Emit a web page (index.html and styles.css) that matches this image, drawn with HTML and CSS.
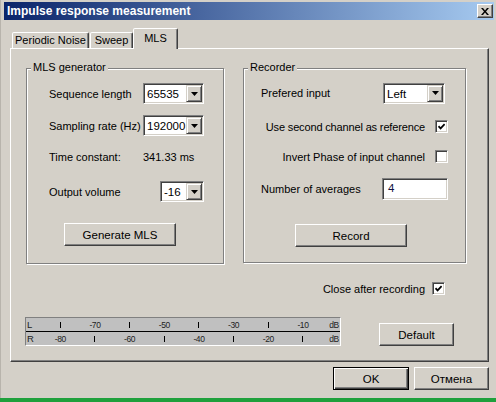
FILE: index.html
```html
<!DOCTYPE html>
<html>
<head>
<meta charset="utf-8">
<link rel="stylesheet" href="styles.css">
</head>
<body>
<div class="win">
  <div class="title">
    <span class="title-text">Impulse response measurement</span>
    <div class="xbtn"><svg width="8" height="7" viewBox="0 0 8 7"><path d="M0 0h2l2 2.4L6 0h2L5 3.5 8 7H6L4 4.6 2 7H0l3-3.5z" fill="#000"/></svg></div>
  </div>
  <div class="tabs">
    <div class="tab t1">Periodic Noise</div>
    <div class="tab t2">Sweep</div>
    <div class="tab t3 sel">MLS</div>
  </div>
  <div class="panel">
    <div class="groups">
      <div class="group g1">
        <div class="legend">MLS generator</div>
        <div class="row">
          <span>Sequence length</span>
          <div class="combo w61"><span class="val">65535</span><span class="dd"><svg width="7" height="4" viewBox="0 0 7 4"><polygon points="0,0 7,0 3.5,4" fill="#000"/></svg></span></div>
        </div>
        <div class="row r2">
          <span>Sampling rate (Hz)</span>
          <div class="combo w61"><span class="val">192000</span><span class="dd"><svg width="7" height="4" viewBox="0 0 7 4"><polygon points="0,0 7,0 3.5,4" fill="#000"/></svg></span></div>
        </div>
        <div class="row r3">
          <span>Time constant:</span>
          <span class="tc">341.33 ms</span>
        </div>
        <div class="row r4">
          <span>Output volume</span>
          <div class="combo w44"><span class="val">-16</span><span class="dd"><svg width="7" height="4" viewBox="0 0 7 4"><polygon points="0,0 7,0 3.5,4" fill="#000"/></svg></span></div>
        </div>
        <div class="btn gen">Generate MLS</div>
      </div>
      <div class="group g2">
        <div class="legend">Recorder</div>
        <div class="row rr1">
          <span>Prefered input</span>
          <div class="combo w62"><span class="val">Left</span><span class="dd"><svg width="7" height="4" viewBox="0 0 7 4"><polygon points="0,0 7,0 3.5,4" fill="#000"/></svg></span></div>
        </div>
        <div class="crow cr1">
          <span>Use second channel as reference</span>
          <span class="check"><svg width="7" height="7" viewBox="0 0 7 7"><path d="M0.5 3.2 L2.6 5.4 L6.6 1.2" fill="none" stroke="#000" stroke-width="1.7"/></svg></span>
        </div>
        <div class="crow cr2">
          <span>Invert Phase of input channel</span>
          <span class="check"></span>
        </div>
        <div class="row rr4">
          <span>Number of averages</span>
          <div class="edit">4</div>
        </div>
        <div class="btn rec">Record</div>
      </div>
    </div>
    <div class="close-row">
      <span>Close after recording</span>
      <span class="check"><svg width="7" height="7" viewBox="0 0 7 7"><path d="M0.5 3.2 L2.6 5.4 L6.6 1.2" fill="none" stroke="#000" stroke-width="1.7"/></svg></span>
    </div>
    <div class="meter-row">
      <div class="meter">
        <div class="mrow">
          <span class="ch">L</span>
          <span class="tick"></span><span class="lbl">-70</span>
          <span class="tick"></span><span class="lbl">-50</span>
          <span class="tick"></span><span class="lbl">-30</span>
          <span class="tick"></span><span class="lbl">-10</span>
          <span class="db">dB</span>
        </div>
        <div class="mrow bot">
          <span class="ch">R</span>
          <span class="lbl">-80</span><span class="tick"></span>
          <span class="lbl">-60</span><span class="tick"></span>
          <span class="lbl">-40</span><span class="tick"></span>
          <span class="lbl">-20</span><span class="tick"></span>
          <span class="db">dB</span>
        </div>
      </div>
      <div class="btn dflt">Default</div>
    </div>
  </div>
  <div class="buttons">
    <div class="btn ok">OK</div>
    <div class="btn cancel">Отмена</div>
  </div>
</div>
</body>
</html>
```
FILE: styles.css
```css
html, body {
  margin: 0;
  padding: 0;
}
body {
  background: #1fa03c;
  font-family: "Liberation Sans", Arial, sans-serif;
  font-size: 11px;
  color: #000;
  white-space: nowrap;
}
.win {
  width: 496px;
  height: 398px;
  background: #d4d0c8;
  box-sizing: border-box;
  overflow: hidden;
  border-left: 1px solid #b8b4ac;
}
.title {
  margin: 2px 2px 0 3px;
  height: 18px;
  background: linear-gradient(to right, #0a246a, #a6caf0);
  display: flex;
  align-items: center;
  justify-content: space-between;
}
.title-text {
  color: #fff;
  font-weight: bold;
  font-size: 12px;
  padding-left: 3px;
}
.xbtn {
  width: 16px;
  height: 14px;
  box-sizing: border-box;
  background: #d4d0c8;
  border: 1px solid;
  border-color: #fff #404040 #404040 #fff;
  box-shadow: inset -1px -1px #808080;
  display: flex;
  align-items: center;
  justify-content: center;
  margin-right: 1px;
}
.tabs {
  display: flex;
  align-items: flex-end;
  height: 20px;
  margin: 8px 0 0 11px;
}
.tab {
  height: 16px;
  box-sizing: border-box;
  border: 1px solid;
  border-bottom: none;
  border-color: #fff #404040 transparent #fff;
  box-shadow: inset -1px 0 #808080;
  border-radius: 2px 2px 0 0;
  text-align: center;
  line-height: 15px;
  background: #d4d0c8;
}
.t1 { width: 77px; }
.t2 { width: 43px; margin-left: 1px; }
.t3 {
  width: 45px;
  height: 21px;
  margin-bottom: -1px;
  position: relative;
  z-index: 1;
  line-height: 18px;
}
.panel {
  margin-left: 9px;
  width: 479px;
  height: 314px;
  box-sizing: border-box;
  border: 1px solid;
  border-color: #fff #404040 #404040 #fff;
  box-shadow: inset -1px -1px #808080;
  padding: 19px 0 0 15px;
}
.groups {
  display: flex;
  align-items: flex-start;
  gap: 19px;
}
.group {
  position: relative;
  box-sizing: border-box;
  border: 1px solid #808080;
  box-shadow: inset 1px 1px #fff, 1px 1px #fff;
}
.legend {
  position: absolute;
  top: -8px;
  left: 4px;
  padding: 0 2px;
  background: #d4d0c8;
  line-height: 13px;
}
.g1 {
  width: 198px;
  height: 196px;
  padding: 14px 19px 0 22px;
}
.g2 {
  width: 223px;
  height: 195px;
  padding: 14px 0 0 17px;
}
.row {
  display: flex;
  align-items: center;
  justify-content: space-between;
  height: 21px;
}
.r2 { margin-top: 11px; }
.r3 { margin-top: 10px; }
.r4 { margin-top: 14px; }
.tc { width: 61px; }
.combo {
  display: flex;
  box-sizing: border-box;
  height: 21px;
  padding: 1px;
  background: #fff;
  border: 1px solid;
  border-color: #808080 #fff #fff #808080;
  box-shadow: inset 1px 1px #404040, inset -1px -1px #d4d0c8;
}
.w61 { width: 61px; }
.w44 { width: 44px; }
.w62 { width: 62px; margin-right: 20px; }
.val {
  flex: 1;
  padding-left: 2px;
  line-height: 18px;
  font-size: 11.5px;
  overflow: hidden;
}
.dd {
  width: 16px;
  height: 17px;
  flex: none;
  box-sizing: border-box;
  background: #d4d0c8;
  border: 1px solid;
  border-color: #d4d0c8 #404040 #404040 #d4d0c8;
  box-shadow: inset 1px 1px #fff, inset -1px -1px #808080;
  display: flex;
  align-items: center;
  justify-content: center;
}
.btn {
  box-sizing: border-box;
  height: 23px;
  background: #d4d0c8;
  border: 1px solid;
  border-color: #fff #404040 #404040 #fff;
  box-shadow: inset -1px -1px #808080;
  display: flex;
  align-items: center;
  justify-content: center;
  font-size: 11.5px;
}
.gen {
  width: 112px;
  margin: 21px 0 0 15px;
}
.rr1 { height: 20px; }
.crow {
  display: flex;
  align-items: center;
  justify-content: flex-end;
  gap: 10px;
  height: 13px;
  padding-right: 17px;
}
.cr1 { margin-top: 17px; letter-spacing: -0.15px; }
.cr2 { margin-top: 17px; }
.check {
  width: 13px;
  height: 13px;
  flex: none;
  box-sizing: border-box;
  background: #fff;
  border: 1px solid;
  border-color: #808080 #fff #fff #808080;
  box-shadow: inset 1px 1px #404040, inset -1px -1px #d4d0c8;
  display: flex;
  align-items: center;
  justify-content: center;
}
.rr4 {
  margin-top: 15px;
  height: 22px;
}
.edit {
  width: 66px;
  height: 22px;
  box-sizing: border-box;
  background: #fff;
  border: 1px solid;
  border-color: #808080 #fff #fff #808080;
  box-shadow: inset 1px 1px #404040, inset -1px -1px #d4d0c8;
  margin-right: 17px;
  padding: 3px 0 0 5px;
  font-size: 11.5px;
  color: #101040;
}
.rec {
  width: 112px;
  margin: 24px 0 0 34px;
}
.close-row {
  display: flex;
  align-items: center;
  justify-content: flex-end;
  gap: 7px;
  height: 13px;
  margin-top: 18px;
  padding-right: 43px;
}
.meter-row {
  display: flex;
  align-items: flex-end;
  margin-top: 22px;
}
.meter {
  width: 316px;
  height: 29px;
  box-sizing: border-box;
  margin-left: -1px;
  background: #c0c0c0;
  border: 1px solid;
  border-color: #808080 #fff #fff #808080;
  font-size: 8.5px;
  color: #222;
}
.mrow {
  display: grid;
  grid-template-columns: 17px repeat(8, 34.67px) 1fr;
  align-items: center;
  justify-items: center;
  height: 13px;
  letter-spacing: -0.4px;
}
.mrow.bot {
  border-top: 1px solid #000;
  height: 13px;
}
.ch {
  justify-self: start;
  padding-left: 1px;
  font-size: 9.5px;
}
.tick {
  width: 1px;
  height: 6px;
  background: #000;
}
.db {
  justify-self: start;
  padding-left: 9px;
}
.dflt {
  width: 75px;
  margin-left: 38px;
}
.buttons {
  display: flex;
  justify-content: flex-end;
  gap: 5px;
  margin: 5px 7px 0 0;
}
.ok {
  width: 76px;
  border: 1px solid #000;
  box-shadow: inset 1px 1px #fff, inset -1px -1px #404040, inset -2px -2px #808080;
}
.cancel {
  width: 75px;
}
```
